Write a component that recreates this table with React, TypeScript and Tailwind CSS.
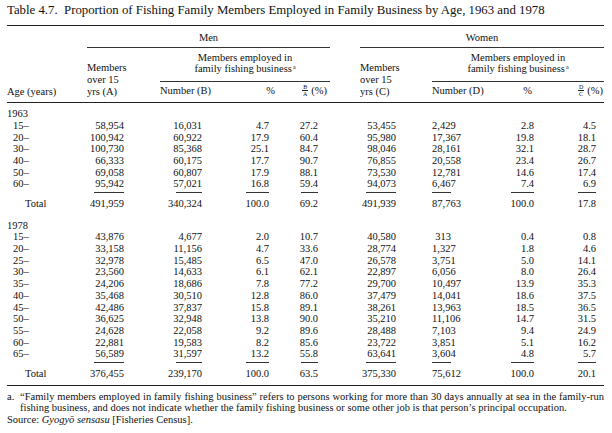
import React from "react";

type Row = [string, string, string, string, string, string, string, string, string];

const rows1963: Row[] = [
    ["15–", "58,954", "16,031", "4.7", "27.2", "53,455", "2,429", "2.8", "4.5"],
    ["20–", "100,942", "60,922", "17.9", "60.4", "95,980", "17,367", "19.8", "18.1"],
    ["30–", "100,730", "85,368", "25.1", "84.7", "98,046", "28,161", "32.1", "28.7"],
    ["40–", "66,333", "60,175", "17.7", "90.7", "76,855", "20,558", "23.4", "26.7"],
    ["50–", "69,058", "60,807", "17.9", "88.1", "73,530", "12,781", "14.6", "17.4"],
    ["60–", "95,942", "57,021", "16.8", "59.4", "94,073", "6,467", "7.4", "6.9"],
];
const total1963: Row = ["Total", "491,959", "340,324", "100.0", "69.2", "491,939", "87,763", "100.0", "17.8"];

const rows1978: Row[] = [
    ["15–", "43,876", "4,677", "2.0", "10.7", "40,580", "313", "0.4", "0.8"],
    ["20–", "33,158", "11,156", "4.7", "33.6", "28,774", "1,327", "1.8", "4.6"],
    ["25–", "32,978", "15,485", "6.5", "47.0", "26,578", "3,751", "5.0", "14.1"],
    ["30–", "23,560", "14,633", "6.1", "62.1", "22,897", "6,056", "8.0", "26.4"],
    ["35–", "24,206", "18,686", "7.8", "77.2", "29,700", "10,497", "13.9", "35.3"],
    ["40–", "35,468", "30,510", "12.8", "86.0", "37,479", "14,041", "18.6", "37.5"],
    ["45–", "42,486", "37,837", "15.8", "89.1", "38,261", "13,963", "18.5", "36.5"],
    ["50–", "36,625", "32,948", "13.8", "90.0", "35,210", "11,106", "14.7", "31.5"],
    ["55–", "24,628", "22,058", "9.2", "89.6", "28,488", "7,103", "9.4", "24.9"],
    ["60–", "22,881", "19,583", "8.2", "85.6", "23,722", "3,851", "5.1", "16.2"],
    ["65–", "56,589", "31,597", "13.2", "55.8", "63,641", "3,604", "4.8", "5.7"],
];
const total1978: Row = ["Total", "376,455", "239,170", "100.0", "63.5", "375,330", "75,612", "100.0", "20.1"];

// column widths / right padding for the numbers
const cols = [
    "w-[73px] pr-[36px]",
    "w-[50px] pr-[8px]",
    "w-[65px] pr-[6px]",
    "w-[55px] pr-[12px]",
    "w-[72px] pr-[36px]",
    "w-[58px] pr-[39px]",
    "w-[55px] pr-[11px]",
    "w-[59px] pr-[8px]",
];
const rules = ["w-[30px]", "w-[26px]", "w-[23px]", "w-[17px]", "w-[30px]", "w-[25px]", "w-[23px]", "w-[18px]"];

function Frac({ top, bottom }: { top: string; bottom: string }) {
    return (
        <span className="inline-flex flex-col items-center align-middle text-[6px] leading-[6px] mr-[3px] -mt-[2px]">
            <span className="border-b border-[#222] px-[1px]">{top}</span>
            <span>{bottom}</span>
        </span>
    );
}

function DataRow({ r, total }: { r: Row; total?: boolean }) {
    return (
        <div className="flex h-[11.7px] items-center">
            <div className={total ? "w-[80px] pl-[18px]" : "w-[80px] pl-[6px]"}>{r[0]}</div>
            {r.slice(1).map((v, i) => (
                <React.Fragment key={i}>
                    {i === 4 && <div className="w-[30px]" />}
                    <div className={`${cols[i]} text-right`}>{v}</div>
                </React.Fragment>
            ))}
        </div>
    );
}

function Underlines() {
    return (
        <div className="flex h-[8px] items-start pt-[2px]">
            <div className="w-[80px]" />
            {rules.map((w, i) => (
                <React.Fragment key={i}>
                    {i === 4 && <div className="w-[30px]" />}
                    <div className={`${cols[i]} flex justify-end`}>
                        <div className={`${w} border-t border-[#333]`} />
                    </div>
                </React.Fragment>
            ))}
        </div>
    );
}

function GroupHead({ title, letter, num, frac }: { title: string; letter: string; num: string; frac: [string, string] }) {
    const men = letter === "A";
    return (
        <div className={men ? "w-[243px] flex flex-col" : "w-[244px] flex flex-col"}>
            <div className="text-center pt-[6px] pb-[3px] border-b border-[#333]">{title}</div>
            <div className="flex items-end">
                <div className={men ? "w-[73px] flex flex-col" : "w-[72px] flex flex-col"}>
                    <span>Members</span>
                    <span>over 15</span>
                    <span>yrs ({letter})</span>
                </div>
                <div className={men ? "w-[170px] flex flex-col" : "w-[172px] flex flex-col"}>
                    <div className="text-center pt-[4px] pb-[4px] border-b border-[#333]">
                        <div>Members employed in</div>
                        <div>
                            family fishing business<span className="relative -top-[3px] text-[6px] ml-[1px]">a</span>
                        </div>
                    </div>
                    <div className="flex pt-[3px] whitespace-nowrap">
                        <div className={men ? "w-[50px]" : "w-[58px]"}>Number ({num})</div>
                        <div className={men ? "w-[65px] text-right" : "w-[55px] text-right pr-[13px]"}>%</div>
                        <div className={men ? "w-[55px] text-right pr-[3px]" : "w-[59px] text-right pr-[1px]"}>
                            <Frac top={frac[0]} bottom={frac[1]} />(%)
                        </div>
                    </div>
                </div>
            </div>
        </div>
    );
}

export default function App() {
    return (
        <div className="w-[612px] h-[433px] bg-white text-[#111] font-['Liberation_Serif',serif] text-[10.5px] leading-[11.7px] pl-[7px] pr-[8px] overflow-hidden">
            <h1 className="text-[12.8px] leading-[14px] pt-[3px] whitespace-pre">
                Table 4.7.  Proportion of Fishing Family Members Employed in Family Business by Age, 1963 and 1978
            </h1>

            {/* header */}
            <div className="mt-[8px] border-t-[1.5px] border-b border-[#222] flex items-end pb-[5px]">
                <div className="w-[80px]">Age (years)</div>
                <GroupHead title="Men" letter="A" num="B" frac={["B", "A"]} />
                <div className="w-[30px]" />
                <GroupHead title="Women" letter="C" num="D" frac={["D", "C"]} />
            </div>

            {/* body */}
            <div className="border-b-[1.5px] border-[#222] pt-[5px] pb-[5px]">
                <div className="h-[11.7px]">1963</div>
                {rows1963.map((r) => (
                    <DataRow key={r[0]} r={r} />
                ))}
                <Underlines />
                <DataRow r={total1963} total />
                <div className="h-[10px]" />
                <div className="h-[11.7px]">1978</div>
                {rows1978.map((r) => (
                    <DataRow key={r[0]} r={r} />
                ))}
                <Underlines />
                <DataRow r={total1978} total />
            </div>

            {/* notes */}
            <div className="pt-[5px]">
                <div className="flex">
                    <span className="w-[13px] shrink-0">a.</span>
                    <span className="flex-1 text-justify [text-align-last:justify]">
                        “Family members employed in family fishing business” refers to persons working for more than 30 days annually at sea in the family-run
                    </span>
                </div>
                <div className="pl-[13px]">
                    fishing business, and does not indicate whether the family fishing business or some other job is that person’s principal occupation.
                </div>
                <div>
                    Source:  <i>Gyogyō sensasu</i> [Fisheries Census].
                </div>
            </div>
        </div>
    );
}
